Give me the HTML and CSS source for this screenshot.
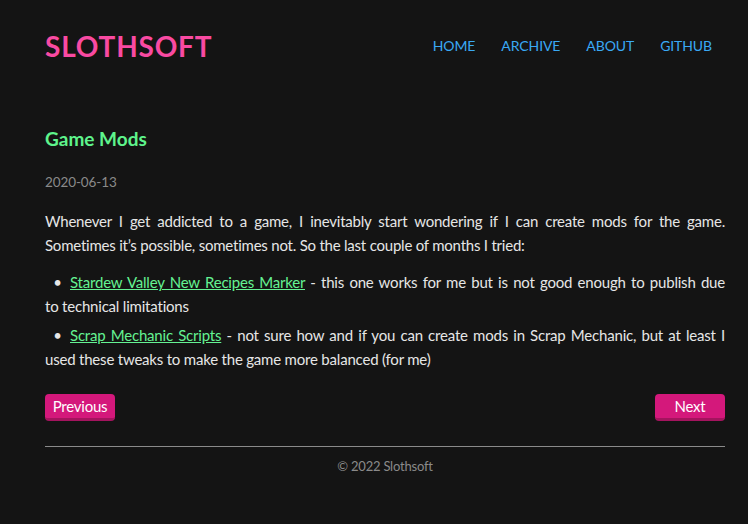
FILE: index.html
```html
<!DOCTYPE html>
<html>
<head>
<meta charset="utf-8">
<link rel="stylesheet" href="styles.css">
</head>
<body>
<div class="page">
  <header class="site-header">
    <a class="logo" href="#">SLOTHSOFT</a>
    <nav class="nav">
      <a href="#">HOME</a>
      <a href="#">ARCHIVE</a>
      <a href="#">ABOUT</a>
      <a href="#">GITHUB</a>
    </nav>
  </header>
  <main class="post">
    <h2 class="post-title">Game Mods</h2>
    <div class="post-date">2020-06-13</div>
    <p class="post-text">Whenever I get addicted to a game, I inevitably start wondering if I can create mods for the game. Sometimes it’s possible, sometimes not. So the last couple of months I tried:</p>
    <ul class="post-list">
      <li><a href="#">Stardew Valley New Recipes Marker</a> - this one works for me but is not good enough to publish due to&nbsp;technical limitations</li>
      <li><a href="#">Scrap Mechanic Scripts</a> - not sure how and if you can create mods in Scrap Mechanic, but at least I used these tweaks to make the game more balanced (for me)</li>
    </ul>
    <div class="pager">
      <a class="btn" href="#">Previous</a>
      <a class="btn" href="#">Next</a>
    </div>
  </main>
  <footer class="site-footer">© 2022 Slothsoft</footer>
</div>
</body>
</html>
```
FILE: styles.css
```css
html, body {
  margin: 0;
  background: #141414;
}
body {
  font-family: "Lato", "Noto Sans", sans-serif;
  font-size: 15px;
  letter-spacing: -0.22px;
  color: #e6e6e6;
}
.page {
  padding: 29px 23px 40px 45px;
}
a { text-decoration: none; }
.site-header {
  display: flex;
  justify-content: space-between;
  align-items: center;
  height: 34px;
}
.logo {
  font-size: 28px;
  font-weight: 700;
  letter-spacing: 0.8px;
  color: #f94aa2;
  line-height: 34px;
}
.nav {
  display: flex;
  gap: 26px;
  padding-right: 13px;
  margin-top: -2px;
}
.nav a {
  color: #3aa9f4;
  font-size: 14px;
  letter-spacing: -0.1px;
}
.post-title {
  margin: 64px 0 0;
  font-size: 19px;
  line-height: 24px;
  font-weight: 700;
  letter-spacing: 0;
  color: #5ef48c;
}
.post-date {
  margin-top: 21px;
  font-size: 13.5px;
  line-height: 20px;
  letter-spacing: -0.1px;
  color: #8a8a8a;
}
.post-text {
  margin: 17px 0 0;
  line-height: 24px;
  text-align: justify;
}
.post-list {
  margin: 13px 0 0;
  padding: 0;
  list-style: none;
  line-height: 24px;
  text-align: justify;
  letter-spacing: -0.2px;
}
.post-list li {
  margin-bottom: 5px;
}
.post-list li::before {
  content: "•";
  display: inline-block;
  width: 25px;
  text-align: center;
}
.post-list a {
  color: #64f292;
  text-decoration: underline;
}
.pager {
  display: flex;
  justify-content: space-between;
  margin-top: 23px;
}
.btn {
  display: block;
  width: 70px;
  height: 24px;
  line-height: 24px;
  text-align: center;
  background: #d4187b;
  border-bottom: 3px solid #a4145e;
  border-radius: 4px;
  color: #fff;
  font-size: 15px;
}
.site-footer {
  margin-top: 25px;
  border-top: 1px solid #8a8a8a;
  padding-top: 9px;
  font-size: 13px;
  line-height: 20px;
  text-align: center;
  color: #8a8a8a;
}
```
